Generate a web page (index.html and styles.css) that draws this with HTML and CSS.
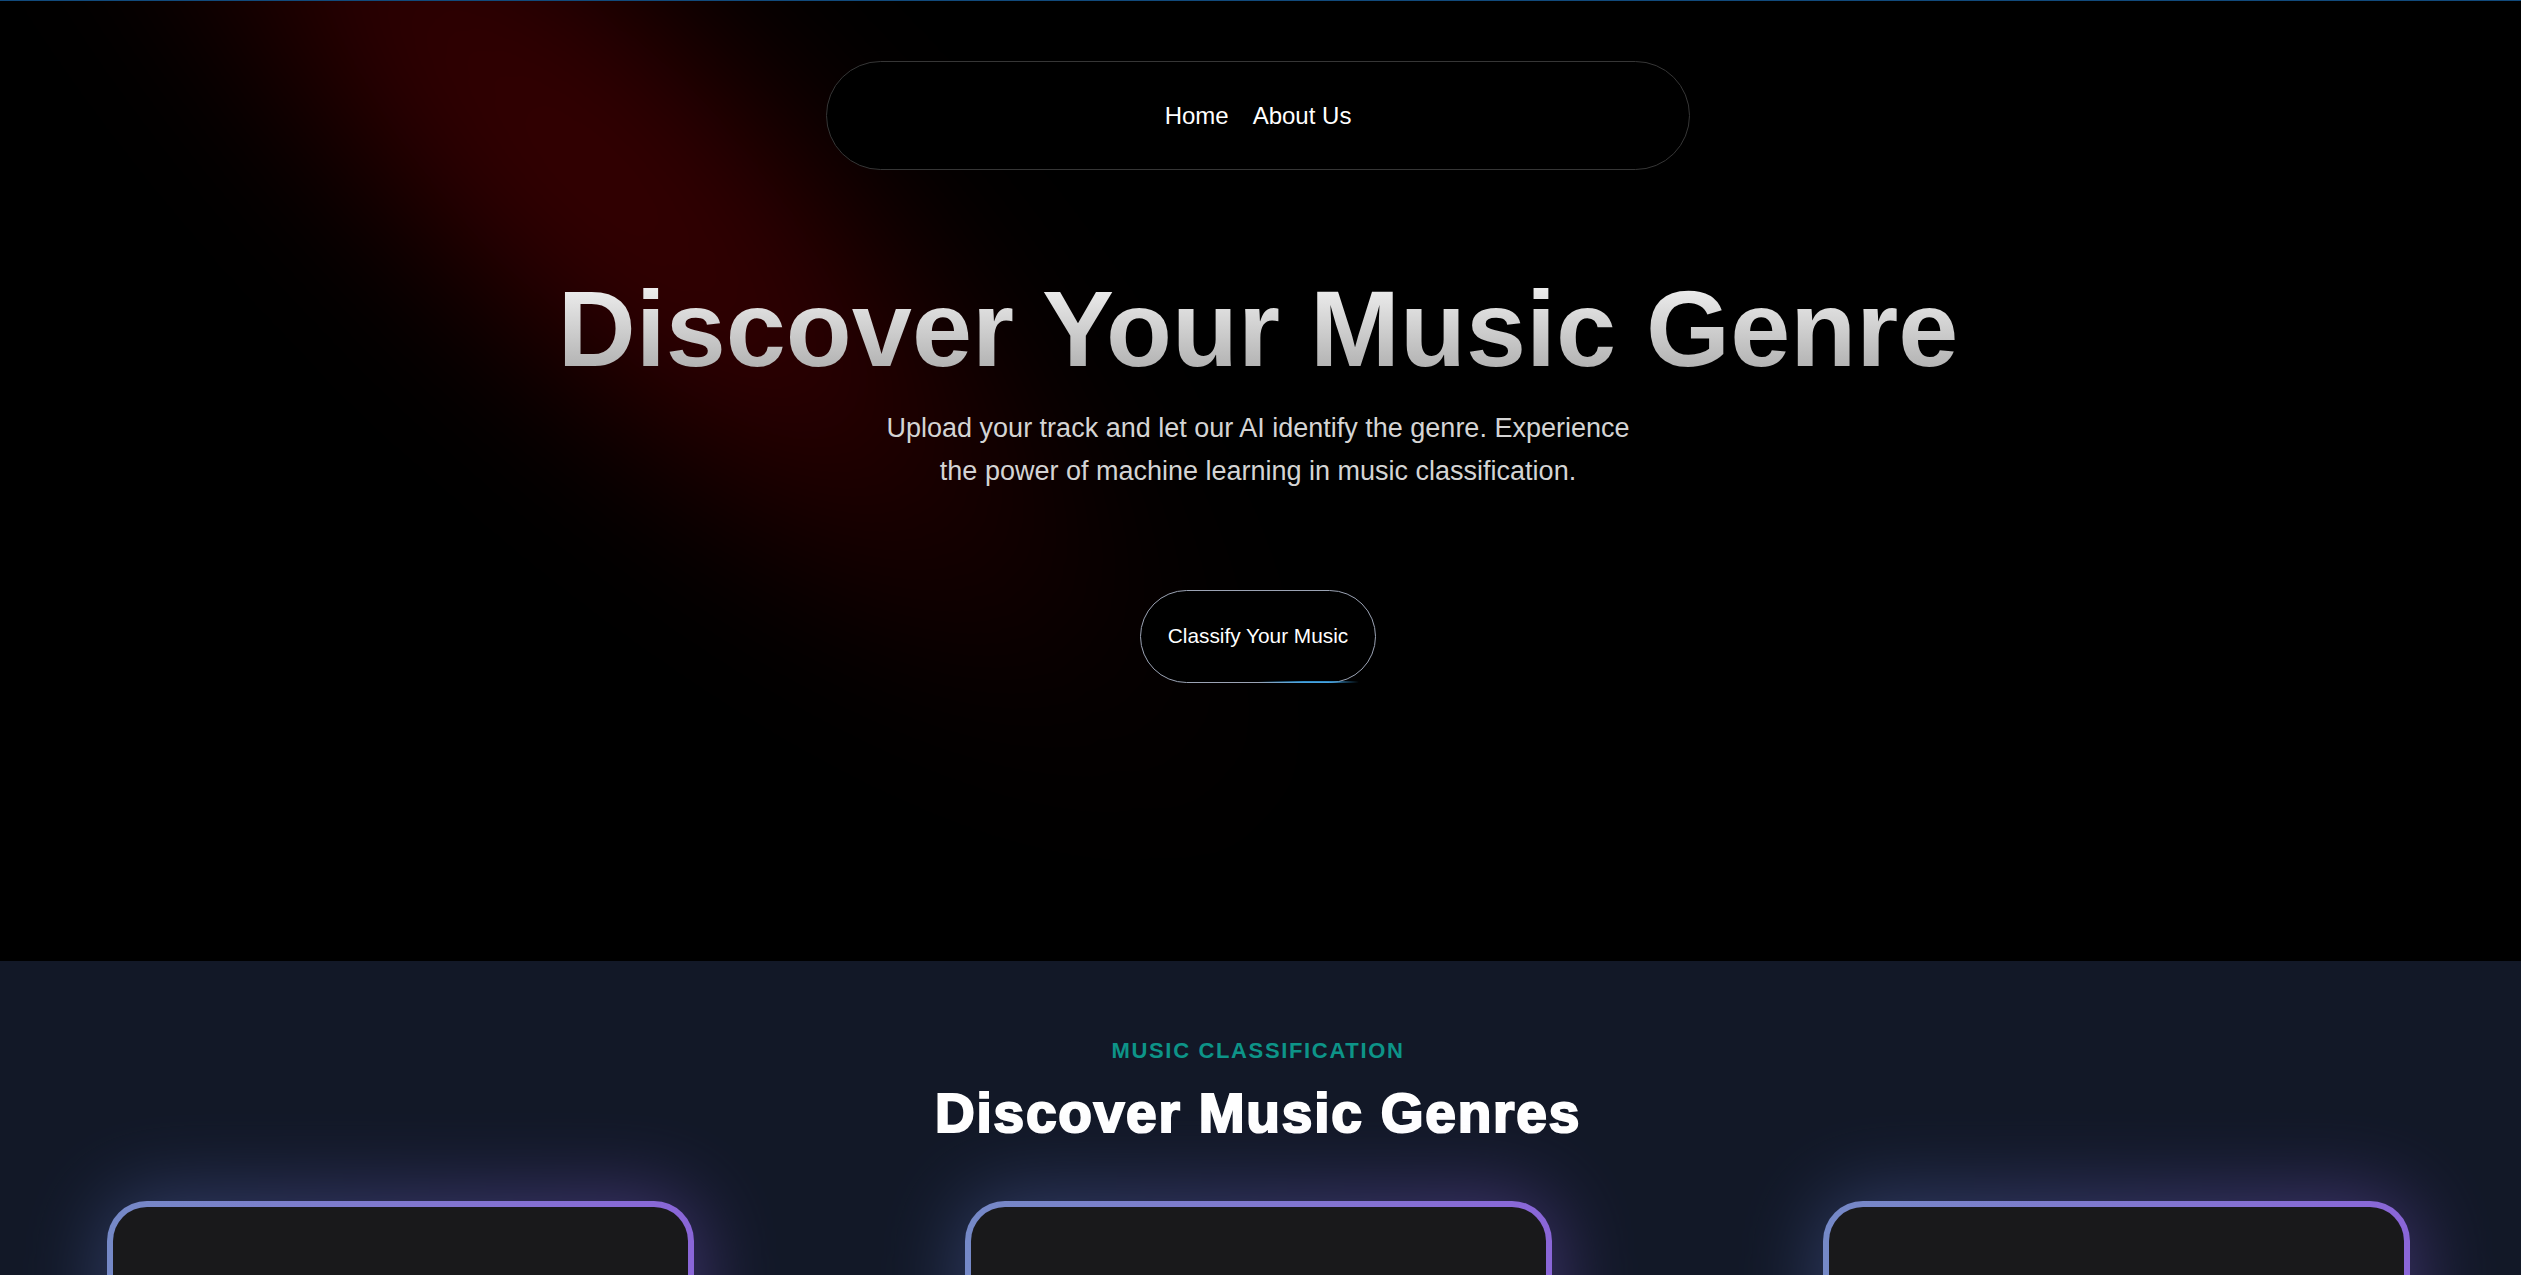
FILE: index.html
```html
<!DOCTYPE html>
<html lang="en">
<head>
<meta charset="utf-8">
<title>Discover Your Music Genre</title>
<link rel="stylesheet" href="styles.css">
</head>
<body>
<div class="topline"></div>
<section class="hero">
  <div class="spotlight"></div>
  <div class="hero-inner">
    <nav class="nav">
      <a href="#" class="nav-link">Home</a>
      <a href="#" class="nav-link">About Us</a>
    </nav>
    <h1 class="hero-title">Discover Your Music Genre</h1>
    <p class="hero-sub">Upload your track and let our AI identify the genre. Experience the power of machine learning in music classification.</p>
    <a href="#" class="cta">Classify Your Music</a>
  </div>
</section>
<section class="genres">
  <div class="genres-inner">
    <p class="eyebrow">MUSIC CLASSIFICATION</p>
    <h2 class="genres-title">Discover Music Genres</h2>
    <div class="cards">
      <div class="card-wrap"><div class="glow"></div><div class="card"></div></div>
      <div class="card-wrap"><div class="glow"></div><div class="card"></div></div>
      <div class="card-wrap"><div class="glow"></div><div class="card"></div></div>
    </div>
  </div>
</section>
</body>
</html>
```
FILE: styles.css
```css
* { box-sizing: border-box; }
html, body { margin: 0; padding: 0; }
body {
  background: #000;
  font-family: "Liberation Sans", Arial, sans-serif;
  color: #fff;
  overflow-x: hidden;
}
.topline {
  position: fixed;
  top: 0; left: 0; right: 0;
  height: 1px;
  background: #114a7c;
  z-index: 10;
}
.hero {
  position: relative;
  height: 961px;
  background: #000;
  overflow: hidden;
}
.spotlight {
  position: absolute;
  left: -358px;
  top: -139px;
  width: 1900px;
  height: 620px;
  transform: rotate(44deg);
  background: radial-gradient(ellipse 50% 50% at 50% 50%, rgba(52,0,1,1) 0%, rgba(49,0,1,0.9) 28%, rgba(40,0,0,0.55) 52%, rgba(22,0,0,0.2) 78%, rgba(0,0,0,0) 100%);
  filter: blur(45px);
  pointer-events: none;
}
.hero-inner {
  position: relative;
  width: calc(100% - 5px);
  display: flex;
  flex-direction: column;
  align-items: center;
  padding-top: 61px;
}
.nav {
  width: 864px;
  height: 109px;
  border: 1px solid #363636;
  border-radius: 999px;
  background: #000;
  display: flex;
  justify-content: center;
  align-items: center;
  gap: 24px;
}
.nav-link {
  color: #fff;
  text-decoration: none;
  font-size: 24px;
  line-height: 29px;
}
.hero-title {
  margin: 100px 0 0;
  font-size: 108px;
  line-height: 1.1;
  font-weight: 700;
  background: linear-gradient(to bottom, #fafafa, #a3a3a3);
  -webkit-background-clip: text;
  background-clip: text;
  color: transparent;
  text-align: center;
}
.hero-sub {
  margin: 18px 0 0;
  max-width: 768px;
  font-size: 27px;
  line-height: 43px;
  color: #d4d4d4;
  text-align: center;
}
.cta {
  position: relative;
  margin-top: 97px;
  height: 93px;
  padding: 0 27px;
  display: inline-flex;
  align-items: center;
  border: 1px solid #9ba3b4;
  border-radius: 999px;
  background: #000;
  color: #fff;
  text-decoration: none;
  font-size: 20.8px;
}
.cta::after {
  content: "";
  position: absolute;
  left: 50%;
  right: 7%;
  bottom: -1px;
  height: 2px;
  border-radius: 2px;
  background: linear-gradient(90deg, rgba(56,160,230,0), rgba(58,163,230,0.85) 45%, rgba(58,163,230,0.85) 70%, rgba(56,160,230,0));
}
.genres {
  background: #121827;
  min-height: 800px;
}
.genres-inner {
  width: calc(100% - 5px);
  padding-top: 76px;
  display: flex;
  flex-direction: column;
  align-items: center;
}
.eyebrow {
  margin: 0;
  font-size: 22px;
  line-height: 28px;
  font-weight: 700;
  letter-spacing: 1.65px;
  color: #0d9488;
}
.genres-title {
  margin: 15px 0 0;
  font-size: 55px;
  line-height: 66px;
  font-weight: 700;
  letter-spacing: 1.8px;
  -webkit-text-stroke: 2.2px #fff;
  color: #fff;
}
.cards {
  margin-top: 55px;
  display: grid;
  grid-template-columns: repeat(3, 587px);
  column-gap: 271px;
  justify-content: center;
}
.card-wrap {
  position: relative;
}
.glow {
  position: absolute;
  inset: -6px -4px;
  border-radius: 48px;
  background: linear-gradient(90deg, #5a74c0, #8a5fe0);
  filter: blur(40px);
  opacity: 0.4;
}
.card {
  position: relative;
  height: 520px;
  border: 6px solid transparent;
  border-radius: 40px;
  background: linear-gradient(#19191b, #19191b) padding-box, linear-gradient(90deg, #7589c7, #8a66d8) border-box;
}
```
